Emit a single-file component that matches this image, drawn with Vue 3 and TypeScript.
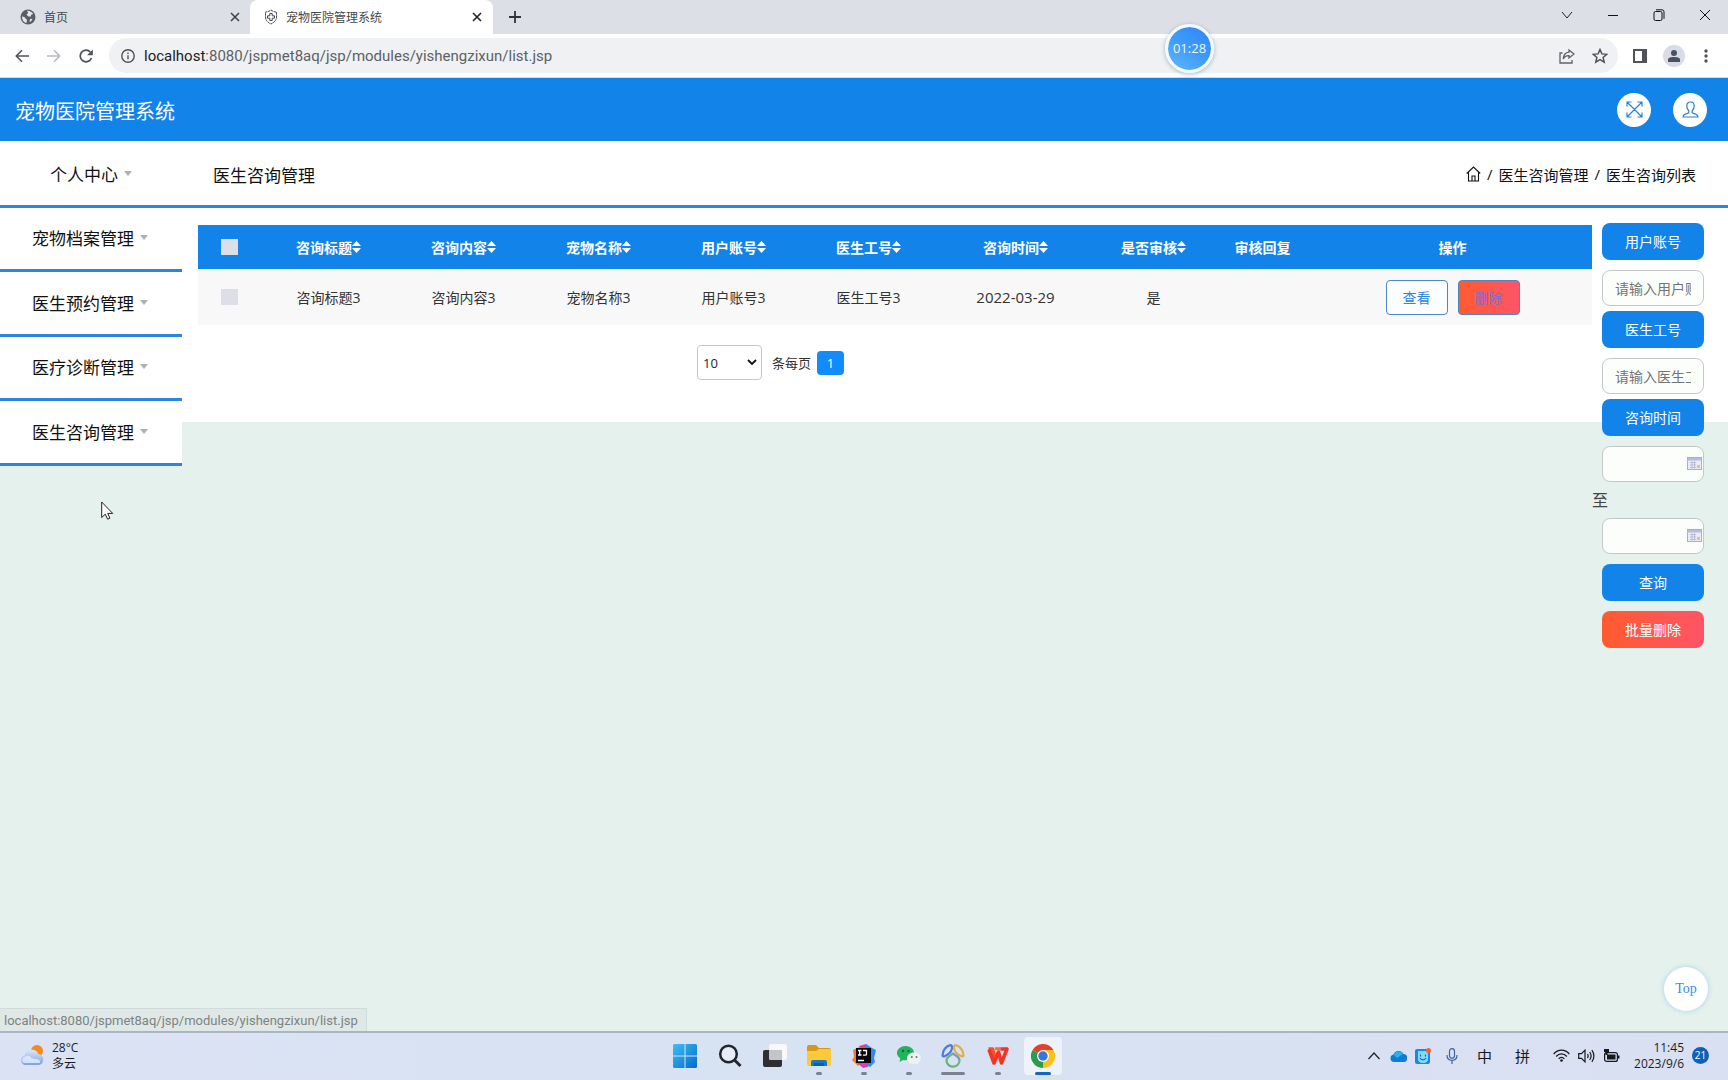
<script setup lang="ts">
import { ref } from 'vue'

interface Column {
  key: string
  title: string
  width: number
  sortable: boolean
}

const menus: string[] = ['宠物档案管理', '医生预约管理', '医疗诊断管理', '医生咨询管理']

const columns: Column[] = [
  { key: 'title', title: '咨询标题', width: 135, sortable: true },
  { key: 'content', title: '咨询内容', width: 135, sortable: true },
  { key: 'pet', title: '宠物名称', width: 135, sortable: true },
  { key: 'account', title: '用户账号', width: 135, sortable: true },
  { key: 'doctor', title: '医生工号', width: 135, sortable: true },
  { key: 'date', title: '咨询时间', width: 159, sortable: true },
  { key: 'checked', title: '是否审核', width: 117, sortable: true },
  { key: 'reply', title: '审核回复', width: 101, sortable: false },
]

const rows: Record<string, string>[] = [
  {
    title: '咨询标题3',
    content: '咨询内容3',
    pet: '宠物名称3',
    account: '用户账号3',
    doctor: '医生工号3',
    date: '2022-03-29',
    checked: '是',
    reply: '',
  },
]

const pageSize = ref('10')
const account = ref('')
const doctorNo = ref('')
const dateFrom = ref('')
const dateTo = ref('')
</script>

<template>
  <div class="desktop">
    <header class="browser">
      <div class="tabs">
        <div class="tab">
          <svg class="tab-icon" width="16" height="16" viewBox="0 0 16 16">
            <circle cx="8" cy="8" r="7.500" fill="#5a5e63" />
            <path d="M2 7.500c2 .2 3.500.8 3.600 2.300l1.400.9-.5 3.300C4 13.500 2 11 2 7.500zM7 1.800c2.500-.3 5 1.200 6.200 3.200l-2 .8-.6 2-2.600-.6L6.500 5.500 8.200 4zM10 10l2.500-.2-1.300 2.500-1.700.8z" fill="#e4e6eb" />
          </svg>
          <span class="tab-title">首页</span>
          <button class="plain" aria-label="关闭标签页">
            <svg width="10" height="10" viewBox="0 0 10 10"><path d="M1 1l8 8M9 1L1 9" stroke="#3c4043" stroke-width="1.500" /></svg>
          </button>
        </div>
        <div class="tab active">
          <svg class="tab-icon" width="14" height="16" viewBox="0 0 14 16" fill="none" stroke="#44474b">
            <path d="M7 1c2 1.500 3.500 2 5.500 2v5c0 3.500-2.500 5.500-5.500 7-3-1.500-5.500-3.500-5.500-7V3c2 0 3.500-.5 5.500-2z" stroke-dasharray="2.500 .6" />
            <path d="M5.800 4.500h2.400v2.300h2.300v2.400H8.200v2.300H5.800V9.200H3.500V6.800h2.300z" />
          </svg>
          <span class="tab-title">宠物医院管理系统</span>
          <button class="plain" aria-label="关闭标签页">
            <svg width="10" height="10" viewBox="0 0 10 10"><path d="M1 1l8 8M9 1L1 9" stroke="#202124" stroke-width="1.600" /></svg>
          </button>
        </div>
        <button class="plain new-tab" aria-label="新标签页">
          <svg width="14" height="14" viewBox="0 0 14 14"><path d="M7 1v12M1 7h12" stroke="#303338" stroke-width="1.800" /></svg>
        </button>
        <div class="window-buttons">
          <button class="plain" aria-label="搜索标签页"><svg width="12" height="12" viewBox="0 0 12 12" fill="none" stroke="#222"><path d="M1 3l5 6 5-6" /></svg></button>
          <button class="plain" aria-label="最小化"><svg width="12" height="12" viewBox="0 0 12 12" stroke="#111"><path d="M1 6.500h10" /></svg></button>
          <button class="plain" aria-label="还原"><svg width="12" height="12" viewBox="0 0 12 12" fill="none" stroke="#111"><rect x="1" y="2.500" width="8" height="9" rx="1.500" /><path d="M3 .8h6a2 2 0 0 1 2 2v7" /></svg></button>
          <button class="plain" aria-label="关闭"><svg width="12" height="12" viewBox="0 0 12 12" stroke="#111"><path d="M1 1l10 10M11 1L1 11" /></svg></button>
        </div>
      </div>

      <div class="toolbar">
        <div class="nav-buttons">
          <button class="plain" aria-label="后退"><svg width="14" height="14" viewBox="0 0 14 14" fill="none" stroke="#4f5357" stroke-width="1.600"><path d="M14 7H1.500M7 1.200L1.300 7 7 12.800" /></svg></button>
          <button class="plain" aria-label="前进"><svg width="14" height="14" viewBox="0 0 14 14" fill="none" stroke="#b9bcc0" stroke-width="1.600"><path d="M0 7h12.500M7 1.200L12.700 7 7 12.800" /></svg></button>
          <button class="plain" aria-label="刷新"><svg width="14" height="14" viewBox="0 0 14 14" fill="none" stroke="#4f5357" stroke-width="1.700"><path d="M12.500 9A5.800 5.800 0 1 1 11.300 3" /><path d="M13.800.5v5.700H8.100z" fill="#4f5357" stroke="none" /></svg></button>
        </div>
        <div class="omnibox">
          <svg width="14" height="14" viewBox="0 0 14 14" fill="none" stroke="#4f5357" stroke-width="1.400"><circle cx="7" cy="7" r="6.200" /><path d="M7 6.300v4M7 3.400v1.600" /></svg>
          <span class="url"><b>localhost</b>:8080/jspmet8aq/jsp/modules/yishengzixun/list.jsp</span>
          <button class="plain share" aria-label="分享"><svg width="16" height="16" viewBox="0 0 16 16" fill="none" stroke="#5f6368" stroke-width="1.300"><path d="M3.500 5H1v10h12v-3" /><path d="M10 2l5 4-5 4V7.700C7.500 7.500 5.500 8.500 4.300 11 4.500 7.500 6.500 4.500 10 4.200z" /></svg></button>
          <button class="plain" aria-label="收藏"><svg width="16" height="16" viewBox="0 0 16 16" fill="none" stroke="#4f5357" stroke-width="1.500"><path d="M8 1.500l1.900 4.400 4.800.4-3.600 3.200 1.100 4.700L8 11.700l-4.200 2.500 1.100-4.700L1.300 6.300l4.800-.4z" /></svg></button>
        </div>
        <button class="plain tool" aria-label="侧边栏"><svg width="14" height="14" viewBox="0 0 14 14"><path d="M0 0h14v14H0zM2 2v10h7V2z" fill="#4f5357" fill-rule="evenodd" /></svg></button>
        <button class="plain avatar" aria-label="用户"><svg width="14" height="14" viewBox="0 0 14 14" fill="#4a5160"><circle cx="7" cy="4" r="3" /><path d="M1 13V10.500C1 8.700 4 8 7 8s6 .7 6 2.500V13z" /></svg></button>
        <button class="plain" aria-label="菜单"><svg width="4" height="14" viewBox="0 0 4 14" fill="#4f5357"><circle cx="2" cy="2" r="1.700" /><circle cx="2" cy="7" r="1.700" /><circle cx="2" cy="12" r="1.700" /></svg></button>
      </div>
      <div class="timer">01:28</div>
    </header>

    <div class="page">
      <header class="app-bar">
        <h1>宠物医院管理系统</h1>
        <button class="round" aria-label="全屏">
          <svg width="17" height="17" viewBox="0 0 17 17" fill="none" stroke="#2b80cf" stroke-width="1.200"><path d="M1.500 1.500l14 14M15.500 1.500l-14 14M1 5.500V1h4.500M11.500 1H16v4.500M16 11.500V16h-4.500M5.500 16H1v-4.500" /></svg>
        </button>
        <button class="round" aria-label="个人信息">
          <svg width="17" height="17" viewBox="0 0 17 17" fill="none" stroke="#2b80cf" stroke-width="1.200"><path d="M1 16c.3-2.500 2-3 4.500-3.600l1.300-.6V9.800C5.300 8.500 4.800 7 4.800 5 4.800 2.500 6.200 1 8.500 1s3.700 1.500 3.700 4c0 2-.5 3.500-2 4.800v2l1.300.6C14 13 15.700 13.500 16 16z" /></svg>
        </button>
      </header>

      <div class="sub-bar">
        <button class="menu-item center"><span>个人中心</span><i class="caret"></i></button>
        <h2>医生咨询管理</h2>
        <nav class="crumbs">
          <a href="#" aria-label="首页"><svg width="15" height="16" viewBox="0 0 15 16" fill="none" stroke="#111" stroke-width="1.100"><path d="M.8 7.500L7.500 1l6.700 6.500M2.500 6.500V15h10V6.500M6 15v-5h3v5" /></svg></a>
          <span>/</span><a href="#">医生咨询管理</a><span>/</span><span>医生咨询列表</span>
        </nav>
      </div>

      <div class="workspace">
        <nav class="sidebar">
          <button v-for="m in menus" :key="m" class="menu-item"><span>{{ m }}</span><i class="caret"></i></button>
        </nav>

        <main class="panel">
          <table>
            <colgroup>
              <col style="width: 63px" />
              <col v-for="c in columns" :key="c.key" :style="{ width: c.width + 'px' }" />
              <col style="width: 279px" />
            </colgroup>
            <thead>
              <tr>
                <th><input type="checkbox" aria-label="全选" /></th>
                <th v-for="c in columns" :key="c.key">
                  <button v-if="c.sortable" class="sort">
                    {{ c.title }}<svg width="9" height="12" viewBox="0 0 9 12" fill="#fff"><path d="M4.500 0L9 5H0zM0 7h9l-4.500 5z" /></svg>
                  </button>
                  <template v-else>{{ c.title }}</template>
                </th>
                <th>操作</th>
              </tr>
            </thead>
            <tbody>
              <tr v-for="r in rows" :key="r.title">
                <td><input type="checkbox" aria-label="选择" /></td>
                <td v-for="c in columns" :key="c.key" :class="{ date: c.key === 'date' }">{{ r[c.key] }}</td>
                <td>
                  <div class="actions">
                    <button class="view">查看</button>
                    <button class="remove">删除</button>
                  </div>
                </td>
              </tr>
            </tbody>
          </table>

          <div class="pager">
            <div class="select-box">
              <select id="size" v-model="pageSize">
                <option>10</option>
                <option>25</option>
                <option>50</option>
              </select>
              <svg width="10" height="7" viewBox="0 0 10 7" fill="none" stroke="#111" stroke-width="1.800"><path d="M1 1l4 4 4-4" /></svg>
            </div>
            <label for="size">条每页</label>
            <button class="page-no">1</button>
          </div>
        </main>

        <form class="filters" @submit.prevent>
          <label class="block" for="account">用户账号</label>
          <input id="account" v-model="account" type="text" placeholder="请输入用户账号" />
          <label class="block next" for="doctor">医生工号</label>
          <input id="doctor" v-model="doctorNo" type="text" placeholder="请输入医生工号" />
          <label class="block next" for="from">咨询时间</label>
          <div class="date-box">
            <input id="from" v-model="dateFrom" type="text" />
            <svg width="15" height="13" viewBox="0 0 15 13"><rect x=".5" y=".5" width="14" height="12" fill="#e9ebf5" stroke="#a9b0cc" /><path d="M1 1h13v2.500H1z" fill="#b3bbe0" /><path d="M3 5.500h6M3 8h6M3 10.500h6M5 4.500v7M7.500 4.500v7" stroke="#b9bed6" /><path d="M10 8h3v3h-3z" fill="#ecb9a8" /></svg>
          </div>
          <label class="to" for="to">至</label>
          <div class="date-box">
            <input id="to" v-model="dateTo" type="text" />
            <svg width="15" height="13" viewBox="0 0 15 13"><rect x=".5" y=".5" width="14" height="12" fill="#e9ebf5" stroke="#a9b0cc" /><path d="M1 1h13v2.500H1z" fill="#b3bbe0" /><path d="M3 5.500h6M3 8h6M3 10.500h6M5 4.500v7M7.500 4.500v7" stroke="#b9bed6" /><path d="M10 8h3v3h-3z" fill="#ecb9a8" /></svg>
          </div>
          <button class="block submit" type="submit">查询</button>
          <button class="block submit danger" type="button">批量删除</button>
        </form>
      </div>

      <svg class="cursor" width="13" height="19" viewBox="0 0 13 19"><path d="M.7 1v15.500l3.600-3.300 2.300 5 2.300-1-2.200-4.800h5z" fill="#fff" stroke="#222" /></svg>
      <button class="to-top">Top</button>
      <div class="status">localhost:8080/jspmet8aq/jsp/modules/yishengzixun/list.jsp</div>
    </div>

    <footer class="taskbar">
      <div class="weather">
        <svg width="24" height="21" viewBox="0 0 24 21">
          <defs><linearGradient id="cloud" x2="0" y2="1"><stop stop-color="#d9e7fb" /><stop offset="1" stop-color="#7f9fdc" /></linearGradient></defs>
          <circle cx="17" cy="6" r="6" fill="#f58a1c" />
          <path d="M5 20a5 5 0 0 1-.5-9.500A7.500 7.500 0 0 1 18.500 9a5.600 5.600 0 0 1 .5 11z" fill="url(#cloud)" />
          <path d="M4 18a3.500 3.500 0 0 1 1-6.500c2-1.500 5-1 6.500 1.500l4 1c3 0 5 1 4.500 4z" fill="#e4eefd" opacity=".8" />
        </svg>
        <div class="stack"><span>28°C</span><span>多云</span></div>
      </div>

      <div class="apps">
        <button class="plain" aria-label="开始"><svg width="24" height="24" viewBox="0 0 24 24"><defs><linearGradient id="win" x2="1" y2="1"><stop stop-color="#3cc0f5" /><stop offset="1" stop-color="#0668cb" /></linearGradient></defs><path d="M1.500 0h10v11.500H0v-10A1.500 1.500 0 0 1 1.500 0zM12.500 0h10A1.500 1.500 0 0 1 24 1.500v10H12.500zM0 12.500h11.500V24h-10A1.500 1.500 0 0 1 0 22.500zM12.500 12.500H24v10a1.500 1.500 0 0 1-1.500 1.500h-10z" fill="url(#win)" /></svg></button>
        <button class="plain" aria-label="搜索"><svg width="24" height="24" viewBox="0 0 24 24" fill="none" stroke="#22262c" stroke-width="2.500"><circle cx="10.500" cy="10" r="8.300" fill="#e8ecf6" /><path d="M16.500 16l6 6" stroke-width="3" /></svg></button>
        <button class="plain" aria-label="任务视图"><svg width="26" height="24" viewBox="0 0 26 24"><rect x="1" y="6" width="19" height="17" rx="2" fill="#2d2f33" /><rect x="7" y="0" width="18" height="16" rx="2" fill="#f7f8fa" /><path d="M7 6h13v10H9a2 2 0 0 1-2-2z" fill="#c3c5c9" /></svg></button>
        <button class="plain" aria-label="文件资源管理器"><svg width="24" height="24" viewBox="0 0 24 24"><path d="M0 3a2 2 0 0 1 2-2h7l3 3h10a2 2 0 0 1 2 2v4H0z" fill="#d69a12" /><path d="M0 7h9l3-2h12v15a2 2 0 0 1-2 2H2a2 2 0 0 1-2-2z" fill="#fbc93a" /><path d="M4 22v-4a2 2 0 0 1 2-2h12a2 2 0 0 1 2 2v4z" fill="#1877c9" /><path d="M7 19h10v3H7z" fill="#0d5aa6" /></svg><i></i></button>
        <button class="plain" aria-label="IntelliJ IDEA"><svg width="24" height="24" viewBox="0 0 24 24"><path d="M1 6l6-3 3 6v10l-4 3-6-6 2-3z" fill="#f97a2b" /><path d="M7 2l7-2 4 5-8 4z" fill="#f2398e" /><path d="M14 0l6 4 4 2-2 8 1 4-5 5-6-3z" fill="#2b8df2" /><path d="M3 17l12 1 1 5-5 1z" fill="#d63fc0" /><path d="M4 4h15v15H4z" fill="#08080c" /><path d="M6 6.500h3.500M7.700 6.500v4.500M6 11h3.500M11 6.500h3.500v3.700q0 1-1.300 1H11M6 16.500h6" fill="none" stroke="#fff" stroke-width="1.300" /></svg><i></i></button>
        <button class="plain" aria-label="微信"><svg width="24" height="24" viewBox="0 0 24 24"><path d="M8.500 2C4 2 0 5 0 9c0 2.300 1.300 4.200 3.300 5.400L2.500 18l3.600-2c6 1 11-2.500 11-7 0-4-4-7-8.600-7z" fill="#22b35c" /><circle cx="6" cy="7" r="1.200" fill="#0c6b34" /><circle cx="11.500" cy="7" r="1.200" fill="#0c6b34" /><path d="M17 8.500c-4 0-7 2.600-7 5.700s3 5.700 7 5.700l2-.3 2.700 1.400-.6-2.500c1.700-1 2.900-2.500 2.900-4.300 0-3.100-3-5.700-7-5.700z" fill="#eff1f2" /><circle cx="14.800" cy="13" r="1" fill="#6f777a" /><circle cx="19.500" cy="13" r="1" fill="#6f777a" /></svg><i></i></button>
        <button class="plain" aria-label="录屏">
          <svg width="24" height="24" viewBox="0 0 24 24" fill="none" stroke-width="2.200" stroke-linejoin="round">
            <defs><linearGradient id="petal" x1="0" y1="1" x2="1" y2="0"><stop stop-color="#5cb56c" /><stop offset=".6" stop-color="#7fb08c" /><stop offset="1" stop-color="#5b8fe0" /></linearGradient></defs>
            <path d="M1.500 11.500C1.500 6.500 5 2 9.500 1.200c1.500 0 2 2 1.300 3.800C10 8.500 7.500 10.500 4 12c-1.200.6-2.500.6-2.500-.5z" stroke="#4a7be2" />
            <path d="M22.500 11.500c0-5-3.500-9.500-8-10.300-1.500 0-2 2-1.300 3.800.8 3.500 3.300 5.500 6.800 7 1.200.6 2.500.6 2.500-.5z" stroke="#dfb04a" />
            <path d="M12 9.500c2 2.500 6.500 2.500 6.500 7a6.500 6.200 0 0 1-13 0c0-4.500 4.500-4.500 6.500-7z" stroke="url(#petal)" />
          </svg><i class="wide"></i>
        </button>
        <button class="plain" aria-label="WPS">
          <svg width="24" height="24" viewBox="0 0 24 24" fill="none" stroke-width="3.600" stroke-linejoin="round">
            <path d="M2.500 5h4l3 11" stroke="#f5512f" /><path d="M9 4.700h5.500" stroke="#ff6a43" stroke-width="3" />
            <path d="M3 5.500l5 13.500 4.500-11 3 11 5.500-14h-6.500" stroke="#ee3622" />
          </svg><i></i>
        </button>
        <button class="plain current" aria-label="Chrome"><svg width="24" height="24" viewBox="0 0 24 24"><path d="M12 12L1.600 6A12 12 0 0 1 22.400 6z" fill="#e2412f" /><path d="M12 12L22.400 6A12 12 0 0 1 12 24z" fill="#fbc116" /><path d="M12 12v12A12 12 0 0 1 1.600 6z" fill="#2a9d48" /><path d="M12 6h10.400L17 15l-5 9a12 12 0 0 0 5-9z" fill="#fbc116" /><circle cx="12" cy="12" r="6" fill="#fff" /><circle cx="12" cy="12" r="4.700" fill="#3576e4" /></svg><i class="blue"></i></button>
      </div>

      <div class="tray">
        <svg class="up" width="12" height="8" viewBox="0 0 12 8" fill="none" stroke="#222" stroke-width="1.200"><path d="M.5 7L6 1l5.500 6" /></svg>
        <svg class="onedrive" width="17" height="12" viewBox="0 0 17 12"><path d="M4 12a3.800 3.800 0 0 1-.5-7.500A5.500 5.500 0 0 1 13.500 4a4 4 0 0 1-.5 8z" fill="#0f7ad8" /><path d="M3.500 4.500A5.500 5.500 0 0 1 13 4L7 8z" fill="#23b4ee" /></svg>
        <svg class="smile" width="16" height="16" viewBox="0 0 16 16"><rect y="1" width="15" height="15" rx="2" fill="#1c86e0" /><path d="M3 3h10v8q0 4-5 4t-5-4z" fill="#7fdcfb" /><path d="M5.500 6.500v2M10.500 6.500v2M5 10c1.500 2.500 4.500 2.500 6 0" fill="none" stroke="#1467b8" stroke-width="1.200" /><circle cx="13.500" cy="2.500" r="2.500" fill="#f0603c" /></svg>
        <svg class="mic" width="12" height="16" viewBox="0 0 12 16" fill="none" stroke="#3a64a8" stroke-width="1.200"><rect x="3.500" y=".7" width="5" height="9.500" rx="2.500" /><path d="M1 7c0 3.500 2 5.300 5 5.300S11 10.500 11 7M6 12.500V16" /></svg>
        <span class="ime">中</span>
        <span class="ime">拼</span>
        <svg class="wifi" width="17" height="13" viewBox="0 0 17 13" fill="none" stroke="#16181d" stroke-width="1.300"><path d="M.7 5C5-.3 12-.3 16.300 5M3.200 7.500c3-3.600 7.600-3.600 10.600 0M5.700 9.800c1.600-2 4-2 5.600 0" /><circle cx="8.500" cy="11.500" r="1.300" fill="#16181d" stroke="none" /></svg>
        <svg class="volume" width="17" height="14" viewBox="0 0 17 14" fill="none" stroke="#16181d" stroke-width="1.200"><path d="M.7 4.700H3.500L7 1.200v11.600L3.500 9.300H.7zM9.500 5q1.300 2 0 4M11.700 3q2.800 4 0 8M13.900 1.200q4 5.800 0 11.600" /></svg>
        <svg class="battery" width="17" height="13" viewBox="0 0 17 13"><rect x="1.600" y="3.600" width="12.800" height="8.800" rx="2" fill="none" stroke="#16181d" stroke-width="1.200" /><path d="M4 5.500h8.500v5H4zM15 6.500h1.500v3H15z" fill="#16181d" /><path d="M1 0v3h1.500v3h2V3H6V0z" fill="#16181d" /></svg>
        <div class="stack clock"><span>11:45</span><span>2023/9/6</span></div>
        <span class="badge">21</span>
      </div>
    </footer>
  </div>
</template>

<style>
body {
  margin: 0;
}
</style>

<style scoped>
* {
  box-sizing: border-box;
}
.desktop {
  display: flex;
  flex-direction: column;
  min-height: 100vh;
  font-family: 'Open Sans', 'Noto Sans CJK SC', sans-serif;
  font-size: 14px;
  color: #333;
}
button {
  font-family: inherit;
  cursor: pointer;
}
svg {
  display: block;
  flex: none;
}
.plain {
  display: flex;
  align-items: center;
  justify-content: center;
  padding: 0;
  border: 0;
  background: none;
}

/* browser frame */
.browser {
  position: relative;
  background: #fff;
  border-bottom: 1px solid #d3dbe4;
}
.tabs {
  display: flex;
  height: 34px;
  background: #dcdfe6;
}
.tab {
  display: flex;
  align-items: center;
  width: 250px;
  padding: 0 10px 0 20px;
  font-size: 12px;
  color: #45484d;
}
.tab.active {
  width: 243px;
  padding: 0 11px 0 14px;
  border-radius: 8px 8px 0 0;
  background: #fff;
}
.tab-title {
  flex: 1;
  margin-left: 8px;
}
.new-tab {
  width: 44px;
}
.window-buttons {
  display: flex;
  margin-left: auto;
}
.window-buttons .plain {
  width: 46px;
  height: 29px;
}
.toolbar {
  display: flex;
  align-items: center;
  height: 43px;
  padding-right: 20px;
}
.nav-buttons {
  display: flex;
  gap: 18px;
  width: 109px;
  padding-left: 15px;
}
.omnibox {
  display: flex;
  flex: 1;
  align-items: center;
  height: 35px;
  padding: 0 10px 0 12px;
  border-radius: 18px;
  background: #eff1f3;
}
.url {
  flex: 1;
  margin-left: 9px;
  font-family: Roboto, sans-serif;
  font-size: 15px;
  color: #5d6166;
}
.url b {
  font-weight: 400;
  color: #202124;
}
.share {
  margin-right: 17px;
}
.tool {
  margin: 0 16px 0 15px;
}
.avatar {
  width: 22px;
  height: 22px;
  margin-right: 19px;
  border-radius: 50%;
  background: #d8dce6;
}
.timer {
  position: absolute;
  top: 24px;
  right: 514px;
  width: 49px;
  height: 49px;
  border: 3px solid #f1faff;
  border-radius: 50%;
  background: linear-gradient(215deg, #2b80fa, #3f9bfa 50%, #62bdfc) border-box;
  background-clip: padding-box;
  box-shadow: 0 1px 4px rgba(60, 80, 120, 0.4);
  font-size: 13px;
  line-height: 43px;
  text-align: center;
  color: #e9f7ff;
}

/* application */
.page {
  position: relative;
  flex: 1;
  background: #e4f1ec;
}
.app-bar {
  display: flex;
  align-items: center;
  gap: 22px;
  height: 63px;
  padding: 0 21px 0 15px;
  background: #1283e9;
}
h1 {
  flex: 1;
  margin: 0;
  padding-top: 4px;
  font-size: 20px;
  font-weight: 400;
  line-height: 28px;
  color: #fff;
}
.round {
  display: flex;
  align-items: center;
  justify-content: center;
  width: 34px;
  height: 34px;
  padding: 0;
  border: 0;
  border-radius: 50%;
  background: #fff;
}
.sub-bar {
  display: flex;
  align-items: center;
  border-bottom: 3px solid #2b84df;
  background: #fff;
  color: #111;
}
.menu-item {
  display: flex;
  align-items: center;
  gap: 6px;
  width: 182px;
  height: 64px;
  padding: 0 0 0 32px;
  border: 0;
  background: #fff;
  font-size: 17px;
  color: #111;
}
.menu-item.center {
  padding-left: 50px;
}
.caret {
  border: 4px solid transparent;
  border-top: 5px solid #b0b0b0;
  border-bottom: 0;
}
h2 {
  flex: 1;
  margin: 0 0 0 31px;
  padding-top: 2px;
  font-size: 17px;
  font-weight: 400;
}
.crumbs {
  display: flex;
  align-items: center;
  gap: 6px;
  padding: 2px 32px 0 0;
  font-size: 15px;
}
.crumbs a {
  color: #111;
  text-decoration: none;
}
.workspace {
  display: flex;
  align-items: flex-start;
}
.sidebar {
  display: grid;
  grid-template-rows: 64px 65px 64px 65px;
  width: 182px;
}
.sidebar .menu-item {
  height: auto;
  padding-bottom: 2px;
  border-bottom: 3px solid #2b84df;
}
.panel {
  flex: 1;
  padding: 17px 0 42px 16px;
  background: #fff;
}
table {
  width: 100%;
  table-layout: fixed;
  border-collapse: collapse;
}
th,
td {
  padding: 0;
  text-align: center;
  vertical-align: middle;
}
th {
  height: 44px;
  background: #1283e9;
  font-size: 14px;
  font-weight: 700;
  color: #fff;
}
td {
  height: 56px;
  background: #f8f8f8;
}
td.date {
  font-size: 15px;
}
.sort {
  display: inline-flex;
  align-items: center;
  padding: 0;
  border: 0;
  background: none;
  font-size: 14px;
  font-weight: 700;
  color: #fff;
}
input[type='checkbox'] {
  display: block;
  appearance: none;
  width: 17px;
  height: 16px;
  margin: 0 auto;
  background: #dcdfe6;
}
.actions {
  display: flex;
  justify-content: center;
  gap: 10px;
}
.actions button {
  width: 62px;
  height: 35px;
  padding: 0;
  border: 1px solid #4a86cc;
  border-radius: 4px;
  background: #fcfdfe;
  font-size: 14px;
  color: #2b84df;
}
.actions .remove {
  background: linear-gradient(90deg, #ff5b2e, #ff5468);
  color: #8a6ac8;
}
.pager {
  display: flex;
  align-items: center;
  justify-content: center;
  margin-top: 20px;
  padding-right: 249px;
  font-size: 13px;
}
.select-box {
  position: relative;
  margin-right: 10px;
}
.select-box svg {
  position: absolute;
  top: 14px;
  right: 5px;
  pointer-events: none;
}
select {
  display: block;
  appearance: none;
  width: 65px;
  height: 35px;
  padding: 0 5px;
  border: 1px solid #c4c8cc;
  border-radius: 4px;
  background: #fff;
  font-family: inherit;
  font-size: 13px;
  color: #222;
}
.page-no {
  width: 27px;
  height: 24px;
  margin-left: 6px;
  padding: 0;
  border: 0;
  border-radius: 4px;
  background: #128bff;
  font-size: 13px;
  color: #fff;
}
.filters {
  display: flex;
  flex-direction: column;
  width: 136px;
  padding: 15px 24px 0 10px;
  background: linear-gradient(#fff 214px, transparent 214px);
}
.block {
  height: 37px;
  padding: 0;
  border: 0;
  border-radius: 8px;
  background: #1283e9;
  font-size: 14px;
  line-height: 37px;
  text-align: center;
  color: #fff;
}
.block.next {
  margin-top: 5px;
}
.filters input {
  width: 100%;
  height: 36px;
  margin-top: 10px;
  padding: 0 12px;
  border: 1px solid #c3c8c8;
  border-radius: 8px;
  background: #fcfefc;
  font-family: inherit;
  font-size: 14px;
}
.filters input::placeholder {
  color: #757575;
}
.date-box {
  position: relative;
}
.date-box svg {
  position: absolute;
  right: 2px;
  bottom: 12px;
}
.date-box input {
  display: block;
}
.to {
  height: 26px;
  margin-left: -10px;
  padding-top: 6px;
  font-size: 16px;
  line-height: 24px;
  color: #444;
}
.submit {
  margin-top: 10px;
}
.danger {
  background: linear-gradient(90deg, #ff5b2e, #ff5468);
}
.cursor {
  position: absolute;
  top: 423px;
  left: 101px;
}
.to-top {
  position: absolute;
  right: 20px;
  bottom: 20px;
  width: 44px;
  height: 44px;
  padding: 0;
  border: 0;
  border-radius: 50%;
  background: #fff;
  box-shadow: 0 0 5px #a8cdec;
  font-family: 'Liberation Serif', serif;
  font-size: 14px;
  color: #3a8ddc;
}
.status {
  position: absolute;
  bottom: 0;
  left: 0;
  padding: 2px 8px 0 4px;
  border-top: 1px solid #d0dcda;
  border-right: 1px solid #d0dcda;
  background: #dfe8e6;
  font-family: Roboto, sans-serif;
  font-size: 13px;
  line-height: 20px;
  color: #7d8383;
}

/* taskbar */
.taskbar {
  display: grid;
  grid-template-columns: 1fr auto 1fr;
  align-items: center;
  height: 49px;
  padding-bottom: 2px;
  border-top: 2px solid #a9b5c1;
  background: linear-gradient(90deg, #dbe2f3, #d7e2f3 50%, #d9e0f1);
}
.weather {
  display: flex;
  align-items: center;
  gap: 8px;
  padding-left: 20px;
}
.stack {
  display: flex;
  flex-direction: column;
  font-size: 12px;
  line-height: 16px;
  color: #1c1e22;
}
.apps {
  display: grid;
  grid-template-columns: repeat(9, 1fr);
  width: 402px;
}
.apps .plain {
  position: relative;
  justify-self: center;
  width: 38px;
  height: 38px;
  border-radius: 4px;
}
.apps .current {
  background: #eef3fb;
}
.apps i {
  position: absolute;
  bottom: 0;
  left: 16px;
  width: 6px;
  height: 3px;
  border-radius: 2px;
  background: #7a8290;
}
.apps i.wide {
  left: 7px;
  width: 24px;
}
.apps i.blue {
  left: 11px;
  width: 16px;
  background: #1168c4;
}
.tray {
  display: flex;
  align-items: center;
  justify-content: flex-end;
  padding-right: 19px;
}
.onedrive {
  margin-left: 10px;
}
.smile {
  margin-left: 8px;
}
.mic {
  margin: 0 19px 0 15px;
}
.ime {
  width: 16px;
  margin-right: 22px;
  font-size: 15px;
  line-height: 20px;
  color: #16181d;
}
.volume,
.battery {
  margin-left: 8px;
}
.clock {
  width: 58px;
  margin: 0 8px 0 6px;
  text-align: right;
}
.badge {
  width: 17px;
  height: 17px;
  border-radius: 50%;
  background: #0d62b8;
  font-size: 10px;
  line-height: 17px;
  text-align: center;
  color: #fff;
}
</style>
